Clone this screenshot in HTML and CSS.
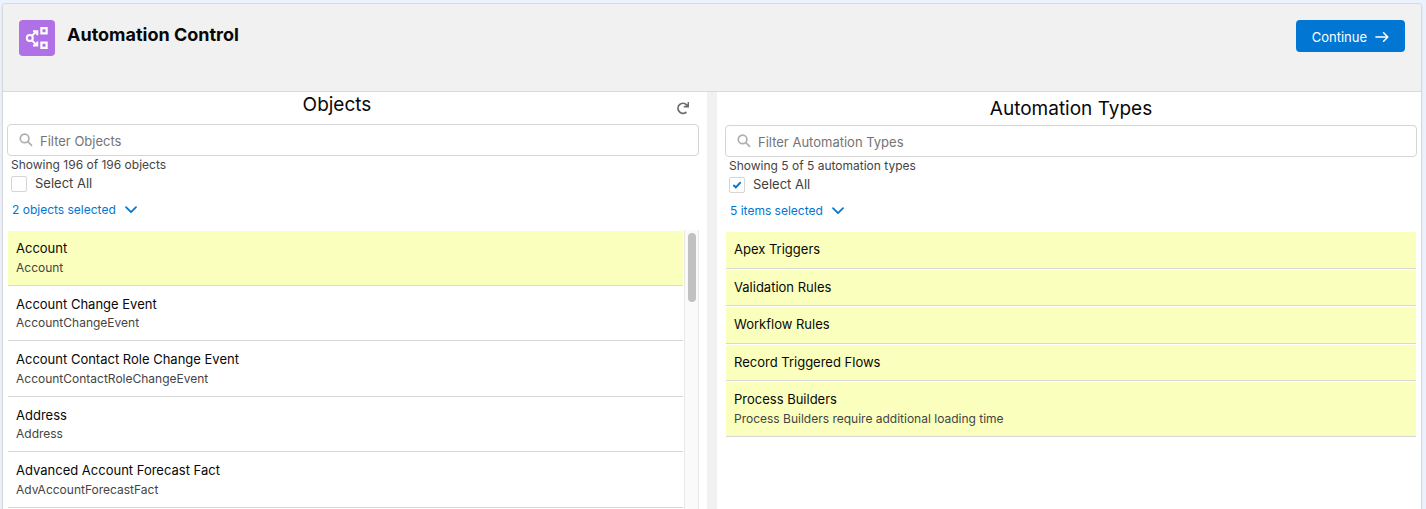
FILE: index.html
```html
<!DOCTYPE html>
<html lang="en">
<head>
<meta charset="utf-8">
<meta name="viewport" content="width=device-width, initial-scale=1">
<title>Automation Control</title>
<link rel="stylesheet" href="styles.css">
</head>
<body>
<main class="card">
  <header class="page-header">
    <span class="app-icon">
      <svg width="36" height="36" viewBox="0 0 36 36" fill="none" stroke="#fff" stroke-width="2" aria-hidden="true">
        <circle cx="10.8" cy="18" r="3"/>
        <path d="M12.8 15.8 18 11.2M14 11.2h4.3v4M12.8 20.2l5.2 5.2M14 25.6h4.3v-4.2"/>
        <path d="M22.4 8.2h5.2v5.2h-5.2zM22.4 22.6h5.2v5.2h-5.2z" stroke-width="2.2"/>
      </svg>
    </span>
    <h1 class="page-title">Automation Control</h1>
    <button class="continue" type="button">Continue
      <svg width="14" height="12" viewBox="0 0 14 12" fill="none" stroke="currentColor" stroke-width="1.6" stroke-linecap="round" stroke-linejoin="round" aria-hidden="true"><path d="M1 6h11.6M8.6 1.8 12.8 6l-4.2 4.2"/></svg>
    </button>
  </header>
  <div class="columns">
    <section class="panel">
      <div class="panel-head">
        <h2 class="panel-title">Objects</h2>
        <button class="refresh" type="button" aria-label="Refresh">
          <svg width="14" height="14" viewBox="0 0 14 14" aria-hidden="true"><path d="M9.9 11.4A5 5 0 1 1 10.4 3.6" fill="none" stroke="#6b6b6b" stroke-width="1.8" stroke-linecap="round"/><path d="M13 1v5.4H7.8V5l2.4-.6L11.6 3V1z" fill="#6b6b6b"/></svg>
        </button>
      </div>
      <div class="search">
        <svg class="search-icon" width="14" height="14" viewBox="0 0 14 14" fill="none" stroke="#b0adab" stroke-width="1.7" stroke-linecap="round" aria-hidden="true"><circle cx="5.6" cy="5.4" r="4.3"/><path d="m8.9 8.7 3.6 3.6"/></svg>
        <input class="search-input" type="text" placeholder="Filter Objects" aria-label="Filter Objects">
      </div>
      <p class="count">Showing 196 of 196 objects</p>
      <label class="select-all"><input class="check" type="checkbox">Select All</label>
      <button class="selected" type="button">2 objects selected
        <svg width="12" height="8" viewBox="0 0 12 8" fill="none" stroke="currentColor" stroke-width="1.7" stroke-linecap="round" stroke-linejoin="round" aria-hidden="true"><path d="m1 1.2 5 5 5-5"/></svg>
      </button>
      <div class="list-area">
        <ul class="list">
          <li class="row row-on"><span class="name">Account</span><span class="detail">Account</span></li>
          <li class="row"><span class="name">Account Change Event</span><span class="detail">AccountChangeEvent</span></li>
          <li class="row"><span class="name">Account Contact Role Change Event</span><span class="detail">AccountContactRoleChangeEvent</span></li>
          <li class="row"><span class="name">Address</span><span class="detail">Address</span></li>
          <li class="row"><span class="name">Advanced Account Forecast Fact</span><span class="detail">AdvAccountForecastFact</span></li>
        </ul>
        <div class="track"><div class="thumb"></div></div>
      </div>
    </section>
    <section class="panel panel-types">
      <div class="panel-head">
        <h2 class="panel-title">Automation Types</h2>
      </div>
      <div class="search">
        <svg class="search-icon" width="14" height="14" viewBox="0 0 14 14" fill="none" stroke="#b0adab" stroke-width="1.7" stroke-linecap="round" aria-hidden="true"><circle cx="5.6" cy="5.4" r="4.3"/><path d="m8.9 8.7 3.6 3.6"/></svg>
        <input class="search-input" type="text" placeholder="Filter Automation Types" aria-label="Filter Automation Types">
      </div>
      <p class="count">Showing 5 of 5 automation types</p>
      <label class="select-all">
        <span class="check-wrap"><input class="check" type="checkbox" checked><svg class="tick" width="8" height="8" viewBox="0 0 8 8" fill="none" stroke="#0176d3" stroke-width="2" stroke-linecap="round" stroke-linejoin="round" aria-hidden="true"><path d="m1 4.6 1.9 1.8L7 1.8"/></svg></span>Select All</label>
      <button class="selected" type="button">5 items selected
        <svg width="12" height="8" viewBox="0 0 12 8" fill="none" stroke="currentColor" stroke-width="1.7" stroke-linecap="round" stroke-linejoin="round" aria-hidden="true"><path d="m1 1.2 5 5 5-5"/></svg>
      </button>
      <div class="list-area">
        <ul class="list">
          <li class="row row-on"><span class="name">Apex Triggers</span></li>
          <li class="row row-on"><span class="name">Validation Rules</span></li>
          <li class="row row-on"><span class="name">Workflow Rules</span></li>
          <li class="row row-on"><span class="name">Record Triggered Flows</span></li>
          <li class="row row-on"><span class="name">Process Builders</span><span class="detail">Process Builders require additional loading time</span></li>
        </ul>
      </div>
    </section>
  </div>
</main>
</body>
</html>
```
FILE: styles.css
```css
* { box-sizing: border-box; }

body {
  margin: 0;
  height: 100vh;
  overflow: hidden;
  padding: 3px 4px 0 2px;
  display: flex;
  background: #ebf2fe;
  color: #181818;
  font: 13px/1.5 Inter, "Liberation Sans", sans-serif;
}

h1, h2, p, ul { margin: 0; padding: 0; }
button, input { font: inherit; }
svg { flex: none; }

.card {
  flex: 1;
  min-width: 0;
  display: flex;
  flex-direction: column;
  border: 1px solid #d8d8d8;
  border-bottom: 0;
  border-radius: 4px 4px 0 0;
  background: #fff;
  box-shadow: 0 2px 2px rgba(0, 0, 0, 0.1);
}

.page-header {
  display: flex;
  align-items: flex-start;
  gap: 12px;
  min-height: 88px;
  padding: 16px;
  border-bottom: 1px solid #d8d8d8;
  border-radius: 4px 4px 0 0;
  background: #f1f1f1;
}

.app-icon {
  display: flex;
  border-radius: 4px;
  background: #b070e6;
}

.page-title {
  flex: 1;
  color: #080808;
  font-size: 18px;
  line-height: 30px;
  font-weight: 700;
}

.continue {
  display: flex;
  align-items: center;
  gap: 8px;
  height: 32px;
  padding: 1px 16px 0;
  border: 0;
  border-radius: 4px;
  background: #0176d3;
  color: #fff;
  line-height: 20px;
}

.columns {
  flex: 1;
  min-height: 0;
  display: grid;
  grid-template-columns: 1fr 1fr;
  gap: 10px;
  background: #f1f1f1;
}

.panel {
  min-width: 0;
  min-height: 0;
  display: flex;
  flex-direction: column;
  overflow: hidden;
  padding: 0 8px 0 4px;
  background: #fff;
}

.panel-types { padding: 0 4px 0 8px; }

.panel-head { display: flex; height: 32px; flex: none; }
.panel-types .panel-head { height: 33px; align-items: flex-end; }

.panel-title {
  flex: 1;
  color: #080808;
  font-size: 19px;
  line-height: 26px;
  font-weight: 400;
  text-align: center;
}
.panel-types .panel-title { line-height: 32px; }

.refresh {
  width: 32px;
  height: 32px;
  padding: 0;
  display: flex;
  align-items: center;
  justify-content: center;
  border: 0;
  background: none;
}

.search {
  flex: none;
  display: flex;
  align-items: center;
  gap: 7px;
  height: 32px;
  padding: 0 11px;
  border: 1px solid #d5d5d5;
  border-radius: 4px;
}

.search-input {
  flex: 1;
  min-width: 0;
  height: 30px;
  padding: 1px 0 0;
  border: 0;
  outline: 0;
  background: none;
}
.search-input::placeholder { color: #747474; opacity: 1; }

.count {
  padding-left: 4px;
  color: #444;
  font-size: 12px;
  line-height: 18px;
}

.select-all {
  display: flex;
  align-items: center;
  gap: 8px;
  height: 20px;
  padding-left: 4px;
  color: #3e3e3c;
}

.check {
  appearance: none;
  width: 16px;
  height: 16px;
  margin: 0;
  border: 1px solid #d5d5d5;
  border-radius: 2px;
  background: #fff;
}

.check-wrap { display: grid; place-items: center; }
.check-wrap > * { grid-area: 1 / 1; }
.tick { pointer-events: none; }
.check:not(:checked) + .tick { display: none; }

.selected {
  flex: none;
  align-self: flex-start;
  display: flex;
  align-items: center;
  gap: 9px;
  height: 32px;
  margin-bottom: 4px;
  padding: 0 5px;
  border: 0;
  background: none;
  color: #0176d3;
  font-size: 12px;
}

.list-area {
  flex: 1;
  min-height: 0;
  display: flex;
}

.list {
  flex: 1;
  padding: 0 1px;
  overflow: hidden;
  list-style: none;
}

.row {
  padding: 8px;
  border-top: 1px solid transparent;
  border-bottom: 1px solid #d8d8d8;
  background-clip: padding-box;
}

.row-on { background-color: #faffbd; }

.name, .detail { display: block; }
.name { color: #080808; }
.detail { color: #444; font-size: 12px; }

.track {
  width: 15px;
  padding: 3px;
  border: solid #e8e8e8;
  border-width: 0 1px;
  background: #fafafa;
}

.thumb {
  height: 69px;
  width: 8px;
  border-radius: 4px;
  background: #c1c1c1;
}
```
